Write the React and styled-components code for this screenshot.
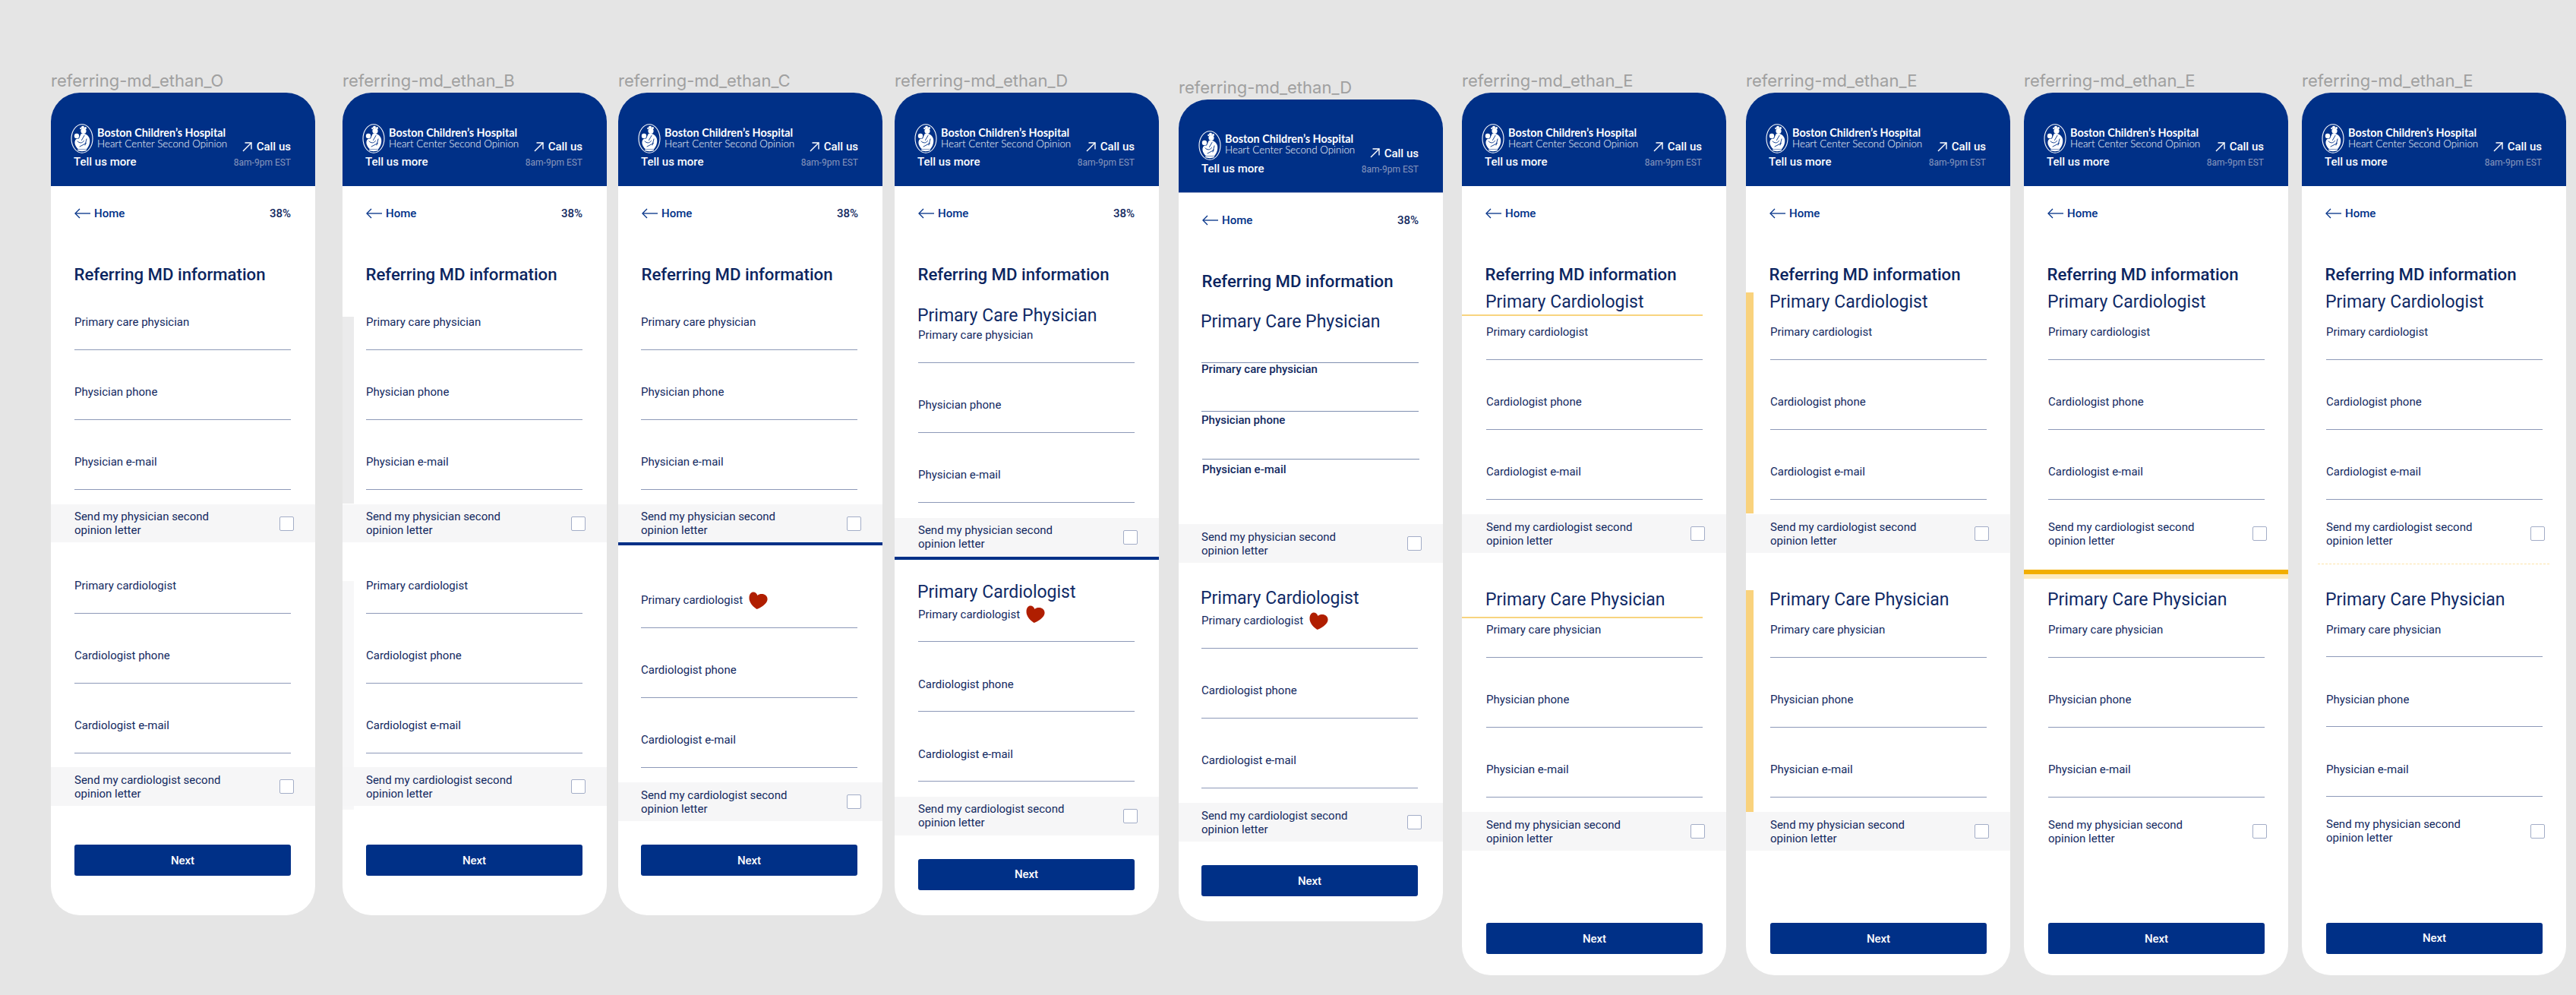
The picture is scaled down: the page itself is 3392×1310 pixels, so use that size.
import React from "react";
import styled, { createGlobalStyle, css } from "styled-components";

const NAVY = "#003087";
const INK = "#12295f";

const GlobalStyle = createGlobalStyle`
  html, body {
    margin: 0;
    padding: 0;
    background: #e5e5e5;
  }
  * {
    box-sizing: border-box;
  }
`;

const Page = styled.div`
  display: flex;
  align-items: flex-start;
  width: 3392px;
  height: 1310px;
  padding: 94px 0 0 67px;
  overflow: hidden;
  font-family: Roboto, "Liberation Sans", sans-serif;
`;

const Column = styled.div`
  flex: none;
  width: 348px;
  margin-left: ${(p) => p.$gap}px;
  margin-top: ${(p) => p.$drop}px;
`;

const FrameName = styled.div`
  height: 28px;
  font-family: Inter, "Liberation Sans", sans-serif;
  font-size: 22px;
  line-height: 24px;
  color: #a0a0a0;
  white-space: nowrap;
`;

const Card = styled.div`
  position: relative;
  display: flex;
  flex-direction: column;
  height: ${(p) => p.$height}px;
  background: #fff;
  border-radius: 38px;
  overflow: hidden;
`;

const Strip = styled.div`
  position: absolute;
  left: 0;
  top: ${(p) => p.$top}px;
  width: ${(p) => p.$width}px;
  height: ${(p) => p.$height}px;
  background: ${(p) => p.$color};
`;

const Header = styled.header`
  flex: none;
  display: flex;
  justify-content: space-between;
  align-items: flex-start;
  height: 123px;
  padding: 41px 32px 0 26px;
  background: ${NAVY};
  ${(p) => p.$edge && "border-bottom: 1px solid #8d9cc4;"}
`;

const LogoRow = styled.div`
  display: flex;
  align-items: center;
  gap: 5px;
  height: 39px;
`;

const LogoText = styled.div`
  padding-bottom: 2px;
  font-family: Lato, Inter, sans-serif;
  color: #fff;
  white-space: nowrap;
`;

const LogoName = styled.div`
  font-size: 14.4px;
  line-height: 15px;
  font-weight: 700;
`;

const LogoSub = styled.div`
  font-size: 13.4px;
  line-height: 15px;
  font-weight: 300;
`;

const TellUs = styled.div`
  margin: 1px 0 0 4px;
  font-size: 15px;
  line-height: 20px;
  font-weight: 500;
  color: #fff;
`;

const CallBlock = styled.div`
  flex: none;
  display: flex;
  flex-direction: column;
  align-items: flex-end;
  margin-top: 20px;
  white-space: nowrap;
`;

const CallRow = styled.div`
  display: flex;
  align-items: center;
  gap: 6px;
  font-size: 15px;
  line-height: 20px;
  font-weight: 500;
  color: #fff;
`;

const Hours = styled.div`
  margin-top: 1px;
  font-size: 12px;
  line-height: 20px;
  color: #8997bd;
`;

const NavRow = styled.div`
  flex: none;
  display: flex;
  justify-content: space-between;
  align-items: center;
  height: 20px;
  margin: 26px 32px 0 31px;
`;

const BackLink = styled.div`
  display: flex;
  align-items: center;
  gap: 5px;
  font-size: 15px;
  font-weight: 500;
  color: ${NAVY};
`;

const Percent = styled.div`
  font-size: 15px;
  font-weight: 500;
  color: ${INK};
`;

const Title = styled.h1`
  flex: none;
  margin: 55px 0 0 30.5px;
  font-size: 22.2px;
  line-height: 30px;
  font-weight: 500;
  color: #0c2560;
  white-space: nowrap;
`;

const Heading = styled.h2`
  flex: none;
  margin: ${(p) => p.$mt}px 0 0 ${(p) => p.$inset - 1}px;
  font-size: 23px;
  line-height: 30px;
  font-weight: 400;
  color: #0f2a66;
  white-space: nowrap;
`;

const Field = styled.div`
  flex: none;
  height: 46.5px;
  width: 285px;
  margin: ${(p) => p.$mt}px 0 0 ${(p) => p.$inset}px;
  border-bottom: 1px solid #8d99b8;
`;

const LinedField = styled.div`
  flex: none;
  width: 286px;
  margin: ${(p) => p.$mt}px 0 0 ${(p) => p.$inset}px;
  padding-top: ${(p) => p.$pad}px;
  border-top: 1px solid #7f8fb0;
`;

const FieldLabel = styled.div`
  display: flex;
  align-items: center;
  gap: 8px;
  height: 20px;
  font-size: 15px;
  line-height: 20px;
  color: ${INK};
  white-space: nowrap;
`;

const StrongLabel = styled.div`
  height: 16px;
  font-size: 15px;
  line-height: 16px;
  font-weight: 500;
  color: ${INK};
  white-space: nowrap;
`;

const LetterRow = styled.div`
  position: relative;
  z-index: 1;
  flex: none;
  display: flex;
  justify-content: space-between;
  align-items: center;
  height: ${(p) => p.$height}px;
  margin-top: ${(p) => p.$mt}px;
  padding: 0 28px 0 ${(p) => p.$inset}px;
  background: ${(p) => (p.$shaded ? "#f6f6f7" : "transparent")};
`;

const LetterText = styled.div`
  width: 220px;
  font-size: 15px;
  line-height: 18px;
  color: ${INK};
`;

const CheckBox = styled.div`
  flex: none;
  width: 19px;
  height: 19px;
  background: #fff;
  border: 1px solid #a3adc7;
  border-radius: 2px;
`;

const dividerKinds = {
  blue: css`
    height: 4px;
    background: ${NAVY};
  `,
  yellow: css`
    height: 2px;
    margin-right: 31px;
    background: #f8d47f;
  `,
  orange: css`
    height: 12px;
    background: linear-gradient(#f2ae00 50%, #fdeabf 50%);
  `,
  dashed: css`
    height: 1px;
    margin-left: 21px;
    margin-right: 22px;
    border-top: 1px dashed #fde3a6;
  `,
};

const Divider = styled.div`
  flex: none;
  margin-top: ${(p) => p.$mt}px;
  ${(p) => dividerKinds[p.$kind]}
`;

const NextButton = styled.button`
  flex: none;
  width: 285px;
  height: 41px;
  margin: ${(p) => p.$mt}px 0 0 ${(p) => p.$inset}px;
  padding: 0;
  border: none;
  border-radius: 3px;
  background: ${NAVY};
  font-family: inherit;
  font-size: 15px;
  font-weight: 500;
  color: #fff;
`;

function Logo() {
  return (
    <svg width="30" height="39" viewBox="0 0 30 39" fill="none" style={{ flex: "none" }}>
      <ellipse cx="15" cy="19.5" rx="14" ry="18.7" stroke="#fff" strokeWidth="1.1" />
      <g fill="#fff">
        <circle cx="17" cy="9.5" r="3.6" />
        <circle cx="16" cy="4.8" r="2" />
        <circle cx="19.5" cy="5.6" r="1.5" />
        <circle cx="13.4" cy="6" r="1.2" />
        <circle cx="8" cy="16" r="3.2" />
        <path d="M13.5 13.5C18 12 23.5 14 25 20C26 25 24 30 21 33.5L10 33.5C7.5 31 5 27.5 5.5 23.5C6 20.5 8 19 11 19.5Z" />
        <path d="M9 35C12 36.5 18 36.5 21 35L21 34L9 34Z" />
      </g>
      <g stroke={NAVY} strokeWidth="0.9" strokeLinecap="round">
        <path d="M9 23C11.5 25.5 15 26 17.5 22.5" />
        <path d="M18 15.5L14.5 21.5" />
        <path d="M12 30L20.5 25.5" />
        <path d="M21 20L19 28" />
      </g>
    </svg>
  );
}

function CallArrow() {
  return (
    <svg width="13" height="13" viewBox="0 0 13 13" fill="none" stroke="#fff" strokeWidth="1.4">
      <path d="M1 12L12 1" />
      <path d="M3.5 1H12V9.5" />
    </svg>
  );
}

function BackArrow() {
  return (
    <svg width="21" height="14" viewBox="0 0 21 14" fill="none" stroke={NAVY} strokeWidth="1.3">
      <path d="M1 7H21" />
      <path d="M7 1L1 7L7 13" />
    </svg>
  );
}

function Heart() {
  return (
    <svg width="25" height="23" viewBox="0 0 25 23" style={{ flex: "none" }}>
      <path
        fill="#b01e00"
        d="M5 .5C8 0 10.5 2 11.5 5C13.5 3 17 2.5 20 3.5C24 5 25.5 9 24 12.5C22 17 16 21 10.5 23C6 20 2 16 .8 11C-.2 6 1.5 1.5 5 .5Z"
      />
    </svg>
  );
}

// layout items, margins are the distance to the previous item
const field = (label, mt = 45.5, heart = false) => ({ type: "field", label, mt, heart });
const lined = (label, mt, pad, shift = 0) => ({ type: "lined", label, mt, pad, shift });
const letter = (text, mt, height = 51, shaded = true) => ({ type: "letter", text, mt, height, shaded });
const heading = (text, mt) => ({ type: "heading", text, mt });
const divider = (kind, mt = 0) => ({ type: "divider", kind, mt });

const PHYS = "Send my physician second opinion letter";
const CARD = "Send my cardiologist second opinion letter";

const classicItems = [
  field("Primary care physician", 38),
  field("Physician phone"),
  field("Physician e-mail"),
  letter(PHYS, 19.5, 50),
  field("Primary cardiologist", 47),
  field("Cardiologist phone"),
  field("Cardiologist e-mail"),
  letter(CARD, 18.5),
];

const swappedItems = (firstLine, secondTop, shaded) => [
  heading("Primary Cardiologist", 7),
  ...firstLine,
  field("Cardiologist phone"),
  field("Cardiologist e-mail"),
  letter(CARD, 19.5, 51, shaded),
  ...secondTop,
  field("Physician phone"),
  field("Physician e-mail"),
  letter(PHYS, 19.5, 51, shaded),
];

const CARE = "Primary Care Physician";

const frames = [
  { name: "referring-md_ethan_O", gap: 0, height: 1082.5, items: classicItems, next: 51, pct: true, inset: 31 },
  {
    name: "referring-md_ethan_B",
    gap: 36,
    height: 1082.5,
    items: classicItems,
    next: 51,
    pct: true,
    inset: 31,
    strips: [
      { top: 295, height: 246, width: 15, color: "#ebebec" },
      { top: 643, height: 301, width: 15, color: "#f7f7f8" },
    ],
  },
  {
    name: "referring-md_ethan_C",
    gap: 15,
    height: 1082.5,
    next: 31,
    pct: true,
    inset: 30,
    items: [
      field("Primary care physician", 38),
      field("Physician phone"),
      field("Physician e-mail"),
      letter(PHYS, 19.5, 50),
      divider("blue"),
      field("Primary cardiologist", 62, true),
      field("Cardiologist phone"),
      field("Cardiologist e-mail"),
      letter(CARD, 19.5),
    ],
  },
  {
    name: "referring-md_ethan_D",
    gap: 16,
    height: 1082.5,
    next: 31,
    pct: true,
    inset: 31,
    items: [
      heading(CARE, 25),
      field("Primary care physician", 0),
      field("Physician phone"),
      field("Physician e-mail"),
      letter(PHYS, 20),
      divider("blue"),
      heading("Primary Cardiologist", 28),
      field("Primary cardiologist", 4, true),
      field("Cardiologist phone"),
      field("Cardiologist e-mail"),
      letter(CARD, 19.5),
    ],
  },
  {
    name: "referring-md_ethan_D",
    gap: 26,
    drop: 8.5,
    height: 1082.5,
    next: 31,
    pct: true,
    edge: true,
    inset: 30,
    items: [
      heading(CARE, 24.5),
      lined("Primary care physician", 37.5, 0),
      lined("Physician phone", 47, 3.5),
      lined("Physician e-mail", 43, 4.5, 1),
      letter(PHYS, 64.5),
      heading("Primary Cardiologist", 32),
      field("Primary cardiologist", 4, true),
      field("Cardiologist phone"),
      field("Cardiologist e-mail"),
      letter(CARD, 19.5),
    ],
  },
  {
    name: "referring-md_ethan_E",
    gap: 25,
    height: 1162,
    next: 95,
    inset: 32,
    items: swappedItems(
      [divider("yellow", 1), field("Primary cardiologist", 11)],
      [heading(CARE, 47), divider("yellow", 7), field("Primary care physician", 5)],
      true
    ),
  },
  {
    name: "referring-md_ethan_E",
    gap: 26,
    height: 1162,
    next: 95,
    inset: 32,
    strips: [
      { top: 263, height: 291, width: 10, color: "#f9d27d" },
      { top: 655, height: 293, width: 10, color: "#f9d27d" },
    ],
    items: swappedItems(
      [field("Primary cardiologist", 14)],
      [heading(CARE, 47), field("Primary care physician", 14)],
      true
    ),
  },
  {
    name: "referring-md_ethan_E",
    gap: 18,
    height: 1162,
    next: 95,
    inset: 32,
    items: swappedItems(
      [field("Primary cardiologist", 14)],
      [divider("orange", 22), heading(CARE, 13), field("Primary care physician", 14)],
      false
    ),
  },
  {
    name: "referring-md_ethan_E",
    gap: 18,
    height: 1162,
    next: 95,
    inset: 32,
    items: swappedItems(
      [field("Primary cardiologist", 14)],
      [divider("dashed", 14), heading(CARE, 31.5), field("Primary care physician", 14)],
      false
    ),
  },
];

function FormItem({ item, inset }) {
  switch (item.type) {
    case "heading":
      return (
        <Heading $mt={item.mt} $inset={inset}>
          {item.text}
        </Heading>
      );
    case "field":
      return (
        <Field $mt={item.mt} $inset={inset}>
          <FieldLabel>
            {item.label}
            {item.heart && <Heart />}
          </FieldLabel>
        </Field>
      );
    case "lined":
      return (
        <LinedField $mt={item.mt} $pad={item.pad} $inset={inset + item.shift}>
          <StrongLabel>{item.label}</StrongLabel>
        </LinedField>
      );
    case "letter":
      return (
        <LetterRow $mt={item.mt} $height={item.height} $shaded={item.shaded} $inset={inset}>
          <LetterText>{item.text}</LetterText>
          <CheckBox />
        </LetterRow>
      );
    default:
      return <Divider $kind={item.kind} $mt={item.mt} />;
  }
}

function Phone({ frame }) {
  return (
    <Column $gap={frame.gap} $drop={frame.drop || 0}>
      <FrameName>{frame.name}</FrameName>
      <Card $height={frame.height}>
        <Header $edge={frame.edge}>
          <div>
            <LogoRow>
              <Logo />
              <LogoText>
                <LogoName>Boston Children’s Hospital</LogoName>
                <LogoSub>Heart Center Second Opinion</LogoSub>
              </LogoText>
            </LogoRow>
            <TellUs>Tell us more</TellUs>
          </div>
          <CallBlock>
            <CallRow>
              <CallArrow />
              Call us
            </CallRow>
            <Hours>8am-9pm EST</Hours>
          </CallBlock>
        </Header>
        {frame.strips &&
          frame.strips.map((s) => (
            <Strip key={s.top} $top={s.top} $height={s.height} $width={s.width} $color={s.color} />
          ))}
        <NavRow>
          <BackLink>
            <BackArrow />
            Home
          </BackLink>
          {frame.pct && <Percent>38%</Percent>}
        </NavRow>
        <Title>Referring MD information</Title>
        {frame.items.map((item, i) => (
          <FormItem key={i} item={item} inset={frame.inset} />
        ))}
        <NextButton $mt={frame.next} $inset={frame.inset}>
          Next
        </NextButton>
      </Card>
    </Column>
  );
}

export default function App() {
  return (
    <>
      <GlobalStyle />
      <Page>
        {frames.map((frame, i) => (
          <Phone key={i} frame={frame} />
        ))}
      </Page>
    </>
  );
}
